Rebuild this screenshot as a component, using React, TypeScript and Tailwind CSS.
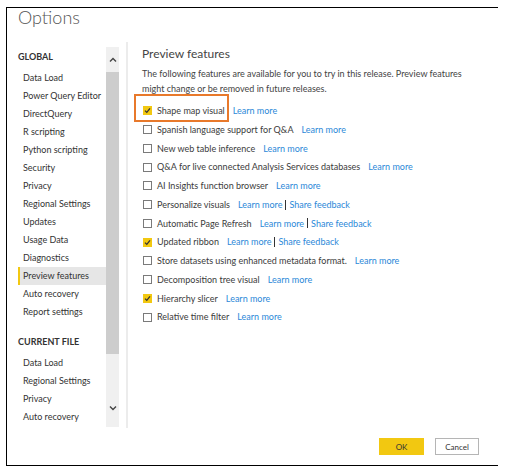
import React from "react";

type Feature = { label: string; checked?: boolean; feedback?: boolean; boxed?: boolean };

const globalItems = [
  "Data Load",
  "Power Query Editor",
  "DirectQuery",
  "R scripting",
  "Python scripting",
  "Security",
  "Privacy",
  "Regional Settings",
  "Updates",
  "Usage Data",
  "Diagnostics",
  "Preview features",
  "Auto recovery",
  "Report settings",
];

const fileItems = ["Data Load", "Regional Settings", "Privacy", "Auto recovery"];

const features: Feature[] = [
  { label: "Shape map visual", checked: true, boxed: true },
  { label: "Spanish language support for Q&A" },
  { label: "New web table inference" },
  { label: "Q&A for live connected Analysis Services databases" },
  { label: "AI Insights function browser" },
  { label: "Personalize visuals", feedback: true },
  { label: "Automatic Page Refresh", feedback: true },
  { label: "Updated ribbon", checked: true, feedback: true },
  { label: "Store datasets using enhanced metadata format." },
  { label: "Decomposition tree visual" },
  { label: "Hierarchy slicer", checked: true },
  { label: "Relative time filter" },
];

function Chevron({ up }: { up?: boolean }) {
  return (
    <svg width="8" height="6" viewBox="0 0 8 6" className="block">
      <path
        d={up ? "M1 4.5 L4 1.5 L7 4.5" : "M1 1.5 L4 4.5 L7 1.5"}
        fill="none"
        stroke="#444"
        strokeWidth="1.4"
      />
    </svg>
  );
}

function Checkbox({ checked }: { checked?: boolean }) {
  if (checked) {
    return (
      <span className="flex h-[9px] w-[9px] shrink-0 items-center justify-center bg-[#f2c811]">
        <svg width="7" height="7" viewBox="0 0 7 7">
          <path d="M1 3.6 L2.8 5.4 L6 1.4" fill="none" stroke="#333" strokeWidth="1.3" />
        </svg>
      </span>
    );
  }
  return <span className="block h-[9px] w-[9px] shrink-0 border-[1.5px] border-[#7a7a7a] bg-white" />;
}

function SideItem({ label, active }: { label: string; active?: boolean }) {
  return (
    <div
      className={`h-[18px] border-l-2 pl-[3px] leading-[18px] text-[9px] text-[#333] ${
        active ? "border-[#f2c811] bg-[#e6e6e6]" : "border-transparent"
      }`}
    >
      {label}
    </div>
  );
}

function FeatureRow({ f }: { f: Feature }) {
  return (
    <div className="relative flex h-[18.75px] items-center text-[9px]">
      {f.boxed && (
        <span className="absolute left-[-8px] top-[-8px] h-[28px] w-[95px] border-2 border-[#e8792b]" />
      )}
      <span className="ml-[1px] flex">
        <Checkbox checked={f.checked} />
      </span>
      <span className="ml-[5px] text-[#3b3b3b]">{f.label}</span>
      <span className="ml-[8px] text-[#2b88d8]">Learn more</span>
      {f.feedback && (
        <>
          <span className="mx-[3px] h-[10px] w-px bg-[#333]" />
          <span className="text-[#2b88d8]">Share feedback</span>
        </>
      )}
    </div>
  );
}

export default function App() {
  return (
    <div className="h-[473px] w-[507px] bg-white pl-[6px] pt-[7px] font-['Lato','Segoe_UI',sans-serif]">
      <div className="flex h-[459px] w-[492px] flex-col border-y border-l border-black">
        <div className="h-[34px] shrink-0 pl-[11px] text-[18px] font-light leading-[18px] text-[#555]">
          Options
        </div>

        <div className="flex h-[386px] shrink-0">
          <div className="flex pl-[11px] pt-[5px]">
            <div className="w-[88px]">
              <div className="h-[20px] text-[9px] font-bold leading-[20px] text-[#333]">GLOBAL</div>
              <div className="mt-[2px]">
                {globalItems.map((it) => (
                  <SideItem key={it} label={it} active={it === "Preview features"} />
                ))}
              </div>
              <div className="mt-[11px] h-[20px] text-[9px] font-bold leading-[20px] text-[#333]">
                CURRENT FILE
              </div>
              <div className="mt-[2px]">
                {fileItems.map((it) => (
                  <SideItem key={it} label={it} />
                ))}
              </div>
            </div>
            <div className="flex h-[380px] w-[13px] flex-col bg-[#f0f0f0]">
              <div className="flex h-[25px] items-center justify-center">
                <Chevron up />
              </div>
              <div className="h-[282px] bg-[#cdcdcd]" />
              <div className="flex h-[73px] items-end justify-center pb-[16px]">
                <Chevron />
              </div>
            </div>
          </div>

          <div className="ml-[7px] h-[386px] w-[2px] bg-[#ececec]" />

          <div className="pl-[14px]">
            <div className="mt-[4px] text-[12px] leading-[16px] text-[#444]">Preview features</div>
            <div className="mt-[4px] text-[9px] leading-[15px] text-[#444]">
              The following features are available for you to try in this release. Preview features
              <br />
              might change or be removed in future releases.
            </div>
            <div className="mt-[5.5px]">
              {features.map((f) => (
                <FeatureRow key={f.label} f={f} />
              ))}
            </div>
          </div>
        </div>

        <div className="flex flex-1 justify-end gap-[11px] pr-[19px] pt-[10px]">
          <div className="flex h-[17px] w-[45px] items-center justify-center bg-[#f2c811] text-[8px] text-[#333]">
            OK
          </div>
          <div className="flex h-[17px] w-[44px] items-center justify-center border border-[#b5b5b5] bg-white text-[8px] text-[#333]">
            Cancel
          </div>
        </div>
      </div>
    </div>
  );
}
